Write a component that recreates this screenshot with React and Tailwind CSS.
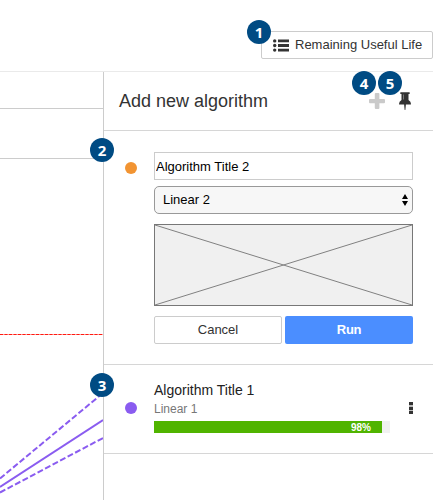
import React from "react";

function Badge({ children, className }) {
  return (
    <span
      className={`absolute z-10 flex h-6 w-6 items-center justify-center rounded-full bg-[#004b83] font-['Open_Sans',sans-serif] text-[15px] leading-none font-bold text-white ${className}`}
    >
      {children}
    </span>
  );
}

function ListIcon() {
  return (
    <svg className="h-[13px] w-4" viewBox="0 0 16 13" fill="#333333">
      <circle cx="1.7" cy="1.9" r="1.7" />
      <circle cx="1.7" cy="6.5" r="1.7" />
      <circle cx="1.7" cy="11.1" r="1.7" />
      <path d="M5 .5h11v2.800H5zM5 5.100h11v2.800H5zM5 9.700h11v2.800H5z" />
    </svg>
  );
}

function PlusIcon() {
  return (
    <svg className="h-4 w-4" viewBox="0 0 16 16" fill="#cacaca">
      <path d="M6.8 0h2.6q1 0 1 1v4.9H15q1 0 1 1v2.4q0 1-1 1h-4.6V15q0 1-1 1H6.8q-1 0-1-1v-4.7H1q-1 0-1-1V6.900q0-1 1-1h4.800V1q0-1 1-1z" />
    </svg>
  );
}

function PinIcon() {
  return (
    <svg className="h-[18px] w-3" viewBox="0 0 12 18" fill="#333333">
      <path d="M2 .2h8q.9 0 .9.900T10 2h-.5v6Q12 9.500 12 11.900q0 .6-.6.6H6.900l-.5 4.900q0 .5-.4.5t-.4-.5l-.5-4.900H.6q-.6 0-.6-.6Q0 9.500 2.500 8V2H2q-.9 0-.9-.9T2 .2z" />
      <path d="M4.500 2.500v5" stroke="#999999" strokeWidth=".7" />
    </svg>
  );
}

function Chart() {
  return (
    <div className="relative w-[103px] shrink-0">
      <svg className="block h-[428px] w-[103px]" viewBox="0 72 103 428" fill="none">
        <path d="M0 108.500H103M0 158.500H103" stroke="#cccccc" />
        <path d="M0 334.500H103" stroke="#ff9e98" />
        <path d="M0 334.500H103" stroke="#ff1a12" strokeDasharray="3 1.500" />
        <g stroke="#8a5cf0" strokeWidth="2">
          <path d="M0 478.500L103 393" strokeDasharray="6 2.500" />
          <path d="M0 487L103 420" />
          <path d="M0 492.500L103 438" strokeDasharray="6 2.500" />
        </g>
      </svg>
      <Badge className="top-[66px] left-[90px]">2</Badge>
      <Badge className="top-[301px] left-[90px]">3</Badge>
    </div>
  );
}

function AlgorithmForm() {
  return (
    <section className="flex h-[234px] border-b border-[#d6d6d6] pt-[21px] pr-5 pl-[21px]">
      <span className="mt-[10px] mr-[17px] h-3 w-3 shrink-0 rounded-full bg-[#f29432]" />
      <div className="w-[259px]">
        <input
          className="block h-7 w-full border border-[#cccccc] bg-white px-px text-[13px] text-black outline-none"
          defaultValue="Algorithm Title 2"
        />
        <div className="mt-1.5 flex h-7 items-center justify-between rounded-[5px] border border-[#999999] bg-[#f7f7f7] pr-[4px] pl-2 text-[13px] text-black">
          <span>Linear 2</span>
          <svg className="h-3 w-[6px]" viewBox="0 0 6 12">
            <path d="M3 0l3 5H0zM3 12l3-5H0z" />
          </svg>
        </div>
        <div className="mt-2.5 h-[82px] border border-[#777777] bg-[#f0f0f0]">
          <svg className="block h-full w-full" viewBox="0 0 257 80">
            <path d="M0 0L257 80M0 80L257 0" stroke="#808080" fill="none" />
          </svg>
        </div>
        <div className="mt-2.5 flex justify-between">
          <button className="h-7 w-32 rounded-[2px] border border-[#cccccc] bg-white text-[13px] text-[#333333]">
            Cancel
          </button>
          <button className="h-7 w-32 rounded-[2px] bg-[#4b8eff] text-[13px] font-bold tracking-[-0.3px] text-white">
            Run
          </button>
        </div>
      </div>
    </section>
  );
}

function AlgorithmRow() {
  return (
    <section className="flex h-[89px] border-b border-[#d6d6d6] pt-4 pr-5 pl-[21px]">
      <span className="mt-[21px] mr-[17px] h-3 w-3 shrink-0 rounded-full bg-[#8a5cf0]" />
      <div className="w-[236px]">
        <div className="h-[19px] text-[14px] leading-[19px] text-[#222222]">Algorithm Title 1</div>
        <div className="h-[18px] text-[12px] leading-[18px] text-[#777777]">Linear 1</div>
        <div className="mt-[3px] h-3 bg-[#f1f1f1]">
          <div className="h-3 w-[228px] bg-[#50b400] pr-[11px] text-right text-[10px] leading-[13px] font-bold text-white">
            98%
          </div>
        </div>
      </div>
      <div className="mt-[21px] ml-[19px] flex h-3 w-1 flex-col justify-between bg-[#bbbbbb]">
        <span className="h-[3px] bg-[#333333]" />
        <span className="h-[3px] bg-[#333333]" />
        <span className="h-[3px] bg-[#333333]" />
      </div>
    </section>
  );
}

export default function App() {
  return (
    <div className="h-[500px] w-[447px] overflow-hidden bg-white font-['Liberation_Sans',Arial,sans-serif]">
      <div className="w-[433px]">
        <header className="flex h-[72px] justify-end border-b border-[#eaeaea] pt-[31px]">
          <div className="relative h-7">
            <button className="flex h-7 w-[172px] items-center rounded-[2px] border border-[#cccccc] pl-[11px] text-[13px] whitespace-nowrap text-[#333333]">
              <ListIcon />
              <span className="ml-1.5">Remaining Useful Life</span>
            </button>
            <Badge className="-top-[11px] -left-[14px]">1</Badge>
          </div>
        </header>
        <main className="flex h-[428px]">
          <Chart />
          <aside className="w-[330px] border-l border-[#cccccc]">
            <div className="relative flex h-[59px] items-center border-b border-[#d6d6d6] pr-[22px] pl-[15px]">
              <h2 className="flex-1 text-[18px] text-[#333333]">Add new algorithm</h2>
              <PlusIcon />
              <span className="ml-[14px]">
                <PinIcon />
              </span>
              <Badge className="-top-px left-[248px]">4</Badge>
              <Badge className="-top-px left-[274px]">5</Badge>
            </div>
            <AlgorithmForm />
            <AlgorithmRow />
          </aside>
        </main>
      </div>
    </div>
  );
}
